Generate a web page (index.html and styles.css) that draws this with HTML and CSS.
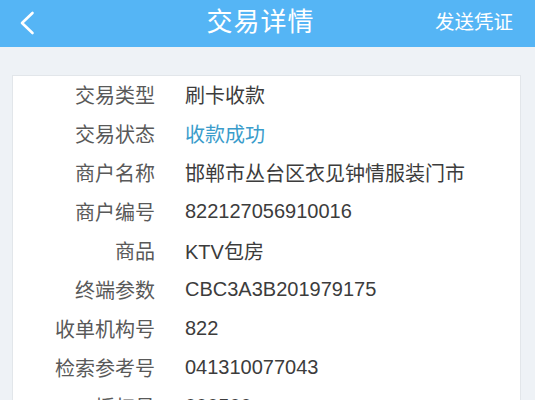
FILE: index.html
```html
<!DOCTYPE html>
<html lang="zh-CN">
<head>
<meta charset="utf-8">
<title>交易详情</title>
<link rel="stylesheet" href="styles.css">
</head>
<body>
<header class="nav">
  <div class="nav-left">
    <svg class="back" width="16" height="24" viewBox="0 0 16 24"><polyline points="13.5,2 3,12 13.5,22" fill="none" stroke="#fff" stroke-width="2.6" stroke-linecap="round" stroke-linejoin="round"/></svg>
  </div>
  <div class="nav-title">交易详情</div>
  <div class="nav-right">发送凭证</div>
</header>
<main class="page">
  <section class="card">
    <div class="row"><span class="label">交易类型</span><span class="value">刷卡收款</span></div>
    <div class="row"><span class="label">交易状态</span><span class="value status">收款成功</span></div>
    <div class="row"><span class="label">商户名称</span><span class="value">邯郸市丛台区衣见钟情服装门市</span></div>
    <div class="row"><span class="label">商户编号</span><span class="value">822127056910016</span></div>
    <div class="row"><span class="label">商品</span><span class="value">KTV包房</span></div>
    <div class="row"><span class="label">终端参数</span><span class="value">CBC3A3B201979175</span></div>
    <div class="row"><span class="label">收单机构号</span><span class="value">822</span></div>
    <div class="row"><span class="label">检索参考号</span><span class="value">041310077043</span></div>
    <div class="row"><span class="label">授权号</span><span class="value">000500</span></div>
  </section>
</main>
</body>
</html>
```
FILE: styles.css
```css
html, body {
  margin: 0;
  padding: 0;
  height: 100%;
  overflow: hidden;
}
body {
  background: #eef2f6;
  font-family: "Liberation Sans", "Noto Sans CJK SC", sans-serif;
}
.nav {
  height: 47px;
  background: #55b5f5;
  display: grid;
  grid-template-columns: 1fr auto 1fr;
  align-items: center;
  color: #fff;
}
.nav-left {
  display: flex;
  align-items: center;
  padding-left: 19px;
  padding-bottom: 2px;
}
.nav-title {
  font-family: "Noto Sans CJK SC", sans-serif;
  font-size: 26px;
  letter-spacing: 1px;
  margin-right: 14px;
  padding-bottom: 8px;
}
.nav-right {
  justify-self: end;
  font-family: "Noto Sans CJK SC", sans-serif;
  font-size: 19.5px;
  padding-right: 22px;
  padding-bottom: 6px;
}
.page {
  padding: 28px 14px 0 12px;
}
.card {
  background: #fff;
  border: 1px solid #e2e6ea;
  border-bottom: none;
}
.row {
  display: grid;
  grid-template-columns: 142px auto;
  column-gap: 30px;
  height: 39px;
  align-items: center;
  font-size: 20px;
}
.label {
  text-align: right;
  color: #595959;
  font-family: "Noto Sans CJK SC", sans-serif;
  padding-bottom: 2px;
}
.value {
  color: #3c3c3c;
  padding-bottom: 2px;
}
.status {
  color: #3a9ccb;
}
```
